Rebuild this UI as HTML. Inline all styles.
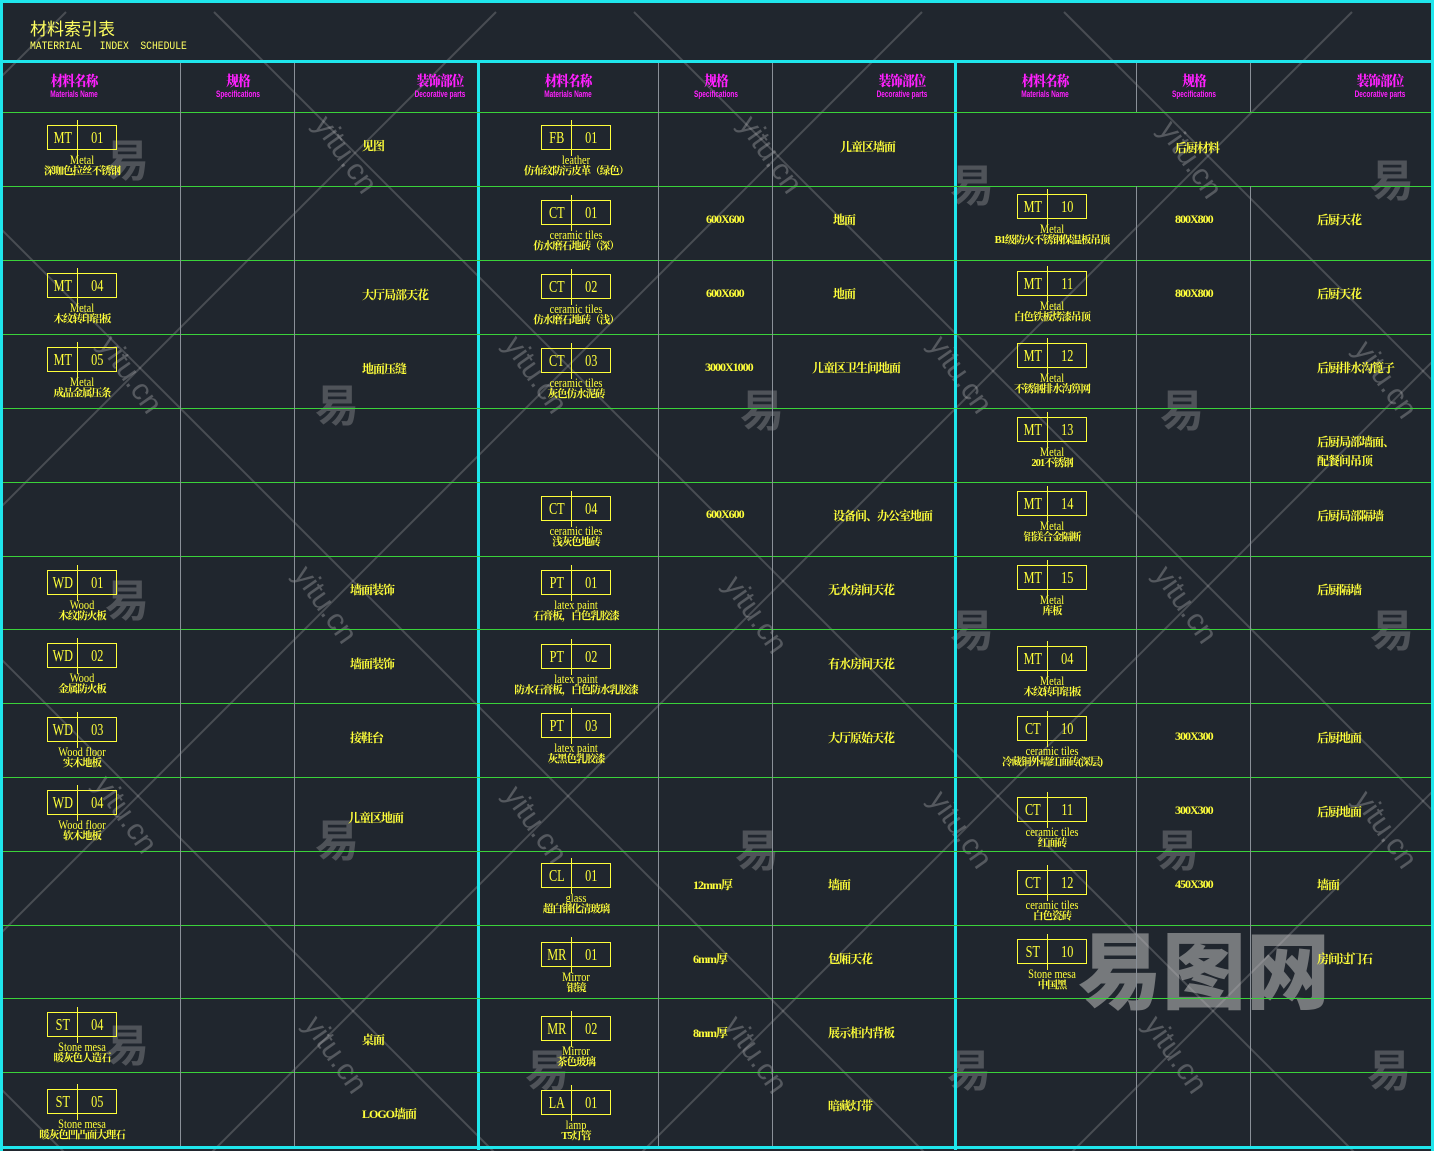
<!DOCTYPE html>
<html><head><meta charset="utf-8"><style>
*{margin:0;padding:0;box-sizing:border-box}
body{width:1434px;height:1151px;background:#20262e;position:relative;overflow:hidden;font-family:"Liberation Sans","Noto Sans CJK SC",sans-serif}
.a{position:absolute}
.cy{position:absolute;background:#1fe6ec}
.gl{position:absolute;height:1px;background:#3ad23a}
.vl{position:absolute;width:1px;background:#8a9098}
.hd{position:absolute;top:76px;width:120px;text-align:center;color:#ff20ff;font-family:"Liberation Serif","Noto Serif CJK SC",serif;font-weight:bold;line-height:1}
.hd b{display:block;font-size:14px;letter-spacing:-1px;transform:scaleX(.9)}
.hd i{display:block;font-style:normal;font-size:9px;font-weight:bold;font-family:"Liberation Sans",sans-serif;transform:scaleX(.72);white-space:nowrap;margin-top:0}
.m{position:absolute;width:200px;text-align:center;color:#ffff3a;font-family:"Liberation Serif","Noto Serif CJK SC",serif;line-height:1}
.bx{display:flex;margin:0 auto;position:relative;width:70px;height:25px;border:1px solid #ffff3a;font-size:17px;align-items:center}
.bx span{display:block;transform:scaleX(.72)}
.bx span:first-child{width:30px;text-align:center;height:100%;line-height:23px}
.bx span:last-child{width:39px;text-align:center;line-height:23px}
.bx:before{content:"";position:absolute;left:29px;top:-6px;height:36px;width:1px;background:#ffff3a}
.en{font-size:13px;line-height:11px;margin-top:4px;transform:scaleX(.8);white-space:nowrap}
.cn{font-size:10.5px;line-height:11px;font-weight:bold;letter-spacing:-1px;margin-top:1px;white-space:nowrap}
.t{position:absolute;color:#ffff3a;font-family:"Liberation Serif","Noto Serif CJK SC",serif;font-weight:bold;font-size:12px;letter-spacing:-1px;white-space:nowrap;line-height:1}
.wm{position:absolute;color:rgba(200,200,200,.28);font-family:"Noto Sans CJK SC",sans-serif;font-size:44px;font-weight:bold}
.yt{position:absolute;color:rgba(210,210,210,.3);font-family:"Liberation Sans",sans-serif;font-size:30px;transform:rotate(55deg);transform-origin:center;width:110px;text-align:center;line-height:1}
</style></head><body>
<svg class="a" style="left:0;top:0" width="1434" height="1151">
<g stroke="rgba(220,220,220,0.22)" stroke-width="2" fill="none">
<line x1="-1076" y1="12" x2="64" y2="1152"/>
<line x1="-646" y1="12" x2="494" y2="1152"/>
<line x1="-216" y1="12" x2="924" y2="1152"/>
<line x1="214" y1="12" x2="1354" y2="1152"/>
<line x1="634" y1="12" x2="1774" y2="1152"/>
<line x1="1064" y1="12" x2="2204" y2="1152"/>
<line x1="66" y1="12" x2="-1074" y2="1152"/>
<line x1="496" y1="12" x2="-644" y2="1152"/>
<line x1="922" y1="12" x2="-218" y2="1152"/>
<line x1="1352" y1="12" x2="212" y2="1152"/>
<line x1="1782" y1="12" x2="642" y2="1152"/>
<line x1="2212" y1="12" x2="1072" y2="1152"/>
</g></svg>
<div class="yt" style="left:290px;top:140px">yitu.cn</div>
<div class="yt" style="left:715px;top:140px">yitu.cn</div>
<div class="yt" style="left:1135px;top:145px">yitu.cn</div>
<div class="yt" style="left:480px;top:360px">yitu.cn</div>
<div class="yt" style="left:905px;top:360px">yitu.cn</div>
<div class="yt" style="left:1330px;top:365px">yitu.cn</div>
<div class="yt" style="left:75px;top:360px">yitu.cn</div>
<div class="yt" style="left:270px;top:590px">yitu.cn</div>
<div class="yt" style="left:700px;top:600px">yitu.cn</div>
<div class="yt" style="left:1130px;top:590px">yitu.cn</div>
<div class="yt" style="left:70px;top:800px">yitu.cn</div>
<div class="yt" style="left:480px;top:810px">yitu.cn</div>
<div class="yt" style="left:905px;top:815px">yitu.cn</div>
<div class="yt" style="left:1330px;top:815px">yitu.cn</div>
<div class="yt" style="left:280px;top:1040px">yitu.cn</div>
<div class="yt" style="left:700px;top:1040px">yitu.cn</div>
<div class="yt" style="left:1120px;top:1040px">yitu.cn</div>
<div class="wm" style="left:105px;top:125px">易</div>
<div class="wm" style="left:315px;top:370px">易</div>
<div class="wm" style="left:105px;top:565px">易</div>
<div class="wm" style="left:315px;top:805px">易</div>
<div class="wm" style="left:105px;top:1010px">易</div>
<div class="wm" style="left:740px;top:375px">易</div>
<div class="wm" style="left:735px;top:815px">易</div>
<div class="wm" style="left:525px;top:1035px">易</div>
<div class="wm" style="left:950px;top:150px">易</div>
<div class="wm" style="left:1370px;top:145px">易</div>
<div class="wm" style="left:1160px;top:375px">易</div>
<div class="wm" style="left:950px;top:595px">易</div>
<div class="wm" style="left:1370px;top:595px">易</div>
<div class="wm" style="left:1155px;top:815px">易</div>
<div class="wm" style="left:947px;top:1035px">易</div>
<div class="wm" style="left:1367px;top:1035px">易</div>
<div class="a" style="left:1078px;top:925px;font-size:84px;font-weight:900;color:rgba(190,190,190,.55);font-family:'Noto Sans CJK SC',sans-serif;line-height:1">易图网</div>

<div class="cy" style="left:0;top:0;width:1434px;height:3px"></div>
<div class="cy" style="left:0;top:0;width:3px;height:1151px"></div>
<div class="cy" style="left:1431px;top:0;width:3px;height:1151px"></div>
<div class="cy" style="left:0;top:1146px;width:1434px;height:3px"></div>
<div class="cy" style="left:0;top:60px;width:1434px;height:3px"></div>
<div class="cy" style="left:477px;top:60px;width:3px;height:1090px"></div>
<div class="cy" style="left:954px;top:60px;width:3px;height:1090px"></div>

<div class="a" style="left:30px;top:18px;color:#ffff60;font-size:17px;font-family:'Noto Sans CJK SC',sans-serif;line-height:1.2">材料索引表</div>
<div class="a" style="left:30px;top:41px;color:#ffff60;font-size:11px;font-family:'Liberation Mono',monospace;white-space:pre;transform:scaleX(.88);transform-origin:left">MATERRIAL   INDEX  SCHEDULE</div>

<div class="gl" style="left:3px;top:112px;width:1428px"></div>
<div class="gl" style="left:3px;top:186px;width:1428px"></div>
<div class="gl" style="left:3px;top:260px;width:1428px"></div>
<div class="gl" style="left:3px;top:334px;width:1428px"></div>
<div class="gl" style="left:3px;top:408px;width:1428px"></div>
<div class="gl" style="left:3px;top:482px;width:1428px"></div>
<div class="gl" style="left:3px;top:556px;width:1428px"></div>
<div class="gl" style="left:3px;top:629px;width:1428px"></div>
<div class="gl" style="left:3px;top:703px;width:1428px"></div>
<div class="gl" style="left:3px;top:777px;width:1428px"></div>
<div class="gl" style="left:3px;top:851px;width:1428px"></div>
<div class="gl" style="left:3px;top:925px;width:1428px"></div>
<div class="gl" style="left:3px;top:998px;width:1428px"></div>
<div class="gl" style="left:3px;top:1072px;width:1428px"></div>
<div class="vl" style="left:180px;top:63px;height:1083px"></div>
<div class="vl" style="left:294px;top:63px;height:1083px"></div>
<div class="vl" style="left:658px;top:63px;height:1083px"></div>
<div class="vl" style="left:772px;top:63px;height:1083px"></div>
<div class="vl" style="left:1136px;top:63px;height:49px"></div>
<div class="vl" style="left:1250px;top:63px;height:49px"></div>
<div class="vl" style="left:1136px;top:186px;height:960px"></div>
<div class="vl" style="left:1250px;top:186px;height:960px"></div>

<div class="hd" style="left:14px"><b>材料名称</b><i>Materials Name</i></div>
<div class="hd" style="left:178px"><b>规格</b><i>Specifications</i></div>
<div class="hd" style="left:380px"><b>装饰部位</b><i>Decorative parts</i></div>
<div class="hd" style="left:508px"><b>材料名称</b><i>Materials Name</i></div>
<div class="hd" style="left:656px"><b>规格</b><i>Specifications</i></div>
<div class="hd" style="left:842px"><b>装饰部位</b><i>Decorative parts</i></div>
<div class="hd" style="left:985px"><b>材料名称</b><i>Materials Name</i></div>
<div class="hd" style="left:1134px"><b>规格</b><i>Specifications</i></div>
<div class="hd" style="left:1320px"><b>装饰部位</b><i>Decorative parts</i></div>

<div class="m" style="left:-18px;top:125px"><div class="bx"><span>MT</span><span>01</span></div><div class="en">Metal</div><div class="cn">深咖色拉丝不锈钢</div></div>
<div class="t" style="left:362px;top:140px">见图</div>
<div class="m" style="left:-18px;top:273px"><div class="bx"><span>MT</span><span>04</span></div><div class="en">Metal</div><div class="cn">木纹转印铝板</div></div>
<div class="t" style="left:362px;top:289px">大厅局部天花</div>
<div class="m" style="left:-18px;top:347px"><div class="bx"><span>MT</span><span>05</span></div><div class="en">Metal</div><div class="cn">成品金属压条</div></div>
<div class="t" style="left:362px;top:363px">地面压缝</div>
<div class="m" style="left:-18px;top:570px"><div class="bx"><span>WD</span><span>01</span></div><div class="en">Wood</div><div class="cn">木纹防火板</div></div>
<div class="t" style="left:350px;top:584px">墙面装饰</div>
<div class="m" style="left:-18px;top:643px"><div class="bx"><span>WD</span><span>02</span></div><div class="en">Wood</div><div class="cn">金属防火板</div></div>
<div class="t" style="left:350px;top:658px">墙面装饰</div>
<div class="m" style="left:-18px;top:717px"><div class="bx"><span>WD</span><span>03</span></div><div class="en">Wood floor</div><div class="cn">实木地板</div></div>
<div class="t" style="left:350px;top:732px">接鞋台</div>
<div class="m" style="left:-18px;top:790px"><div class="bx"><span>WD</span><span>04</span></div><div class="en">Wood floor</div><div class="cn">软木地板</div></div>
<div class="t" style="left:348px;top:812px">儿童区地面</div>
<div class="m" style="left:-18px;top:1012px"><div class="bx"><span>ST</span><span>04</span></div><div class="en">Stone mesa</div><div class="cn">暖灰色人造石</div></div>
<div class="t" style="left:362px;top:1034px">桌面</div>
<div class="m" style="left:-18px;top:1089px"><div class="bx"><span>ST</span><span>05</span></div><div class="en">Stone mesa</div><div class="cn">暖灰色凹凸面大理石</div></div>
<div class="t" style="left:362px;top:1108px">LOGO墙面</div>

<div class="m" style="left:476px;top:125px"><div class="bx"><span>FB</span><span>01</span></div><div class="en">leather</div><div class="cn">仿布纹防污皮革（绿色）</div></div>
<div class="t" style="left:840px;top:141px">儿童区墙面</div>
<div class="m" style="left:476px;top:200px"><div class="bx"><span>CT</span><span>01</span></div><div class="en">ceramic tiles</div><div class="cn">仿水磨石地砖（深）</div></div>
<div class="t" style="left:706px;top:213px">600X600</div><div class="t" style="left:833px;top:214px">地面</div>
<div class="m" style="left:476px;top:274px"><div class="bx"><span>CT</span><span>02</span></div><div class="en">ceramic tiles</div><div class="cn">仿水磨石地砖（浅）</div></div>
<div class="t" style="left:706px;top:287px">600X600</div><div class="t" style="left:833px;top:288px">地面</div>
<div class="m" style="left:476px;top:348px"><div class="bx"><span>CT</span><span>03</span></div><div class="en">ceramic tiles</div><div class="cn">灰色仿水泥砖</div></div>
<div class="t" style="left:705px;top:361px">3000X1000</div><div class="t" style="left:812px;top:362px">儿童区卫生间地面</div>
<div class="m" style="left:476px;top:496px"><div class="bx"><span>CT</span><span>04</span></div><div class="en">ceramic tiles</div><div class="cn">浅灰色地砖</div></div>
<div class="t" style="left:706px;top:508px">600X600</div><div class="t" style="left:833px;top:510px">设备间、办公室地面</div>
<div class="m" style="left:476px;top:570px"><div class="bx"><span>PT</span><span>01</span></div><div class="en">latex paint</div><div class="cn">石膏板，白色乳胶漆</div></div>
<div class="t" style="left:828px;top:584px">无水房间天花</div>
<div class="m" style="left:476px;top:644px"><div class="bx"><span>PT</span><span>02</span></div><div class="en">latex paint</div><div class="cn">防水石膏板，白色防水乳胶漆</div></div>
<div class="t" style="left:828px;top:658px">有水房间天花</div>
<div class="m" style="left:476px;top:713px"><div class="bx"><span>PT</span><span>03</span></div><div class="en">latex paint</div><div class="cn">灰黑色乳胶漆</div></div>
<div class="t" style="left:828px;top:732px">大厅原始天花</div>
<div class="m" style="left:476px;top:863px"><div class="bx"><span>CL</span><span>01</span></div><div class="en">glass</div><div class="cn">超白钢化清玻璃</div></div>
<div class="t" style="left:693px;top:879px">12mm厚</div><div class="t" style="left:828px;top:879px">墙面</div>
<div class="m" style="left:476px;top:942px"><div class="bx"><span>MR</span><span>01</span></div><div class="en">Mirror</div><div class="cn">银镜</div></div>
<div class="t" style="left:693px;top:953px">6mm厚</div><div class="t" style="left:828px;top:953px">包厢天花</div>
<div class="m" style="left:476px;top:1016px"><div class="bx"><span>MR</span><span>02</span></div><div class="en">Mirror</div><div class="cn">茶色玻璃</div></div>
<div class="t" style="left:693px;top:1027px">8mm厚</div><div class="t" style="left:828px;top:1027px">展示柜内背板</div>
<div class="m" style="left:476px;top:1090px"><div class="bx"><span>LA</span><span>01</span></div><div class="en">lamp</div><div class="cn">T5灯管</div></div>
<div class="t" style="left:828px;top:1100px">暗藏灯带</div>

<div class="t" style="left:1175px;top:142px">后厨材料</div>
<div class="m" style="left:952px;top:194px"><div class="bx"><span>MT</span><span>10</span></div><div class="en">Metal</div><div class="cn">B1级防火不锈钢保温板吊顶</div></div>
<div class="t" style="left:1175px;top:213px">800X800</div><div class="t" style="left:1317px;top:214px">后厨天花</div>
<div class="m" style="left:952px;top:271px"><div class="bx"><span>MT</span><span>11</span></div><div class="en">Metal</div><div class="cn">白色铁板烤漆吊顶</div></div>
<div class="t" style="left:1175px;top:287px">800X800</div><div class="t" style="left:1317px;top:288px">后厨天花</div>
<div class="m" style="left:952px;top:343px"><div class="bx"><span>MT</span><span>12</span></div><div class="en">Metal</div><div class="cn">不锈钢排水沟箅网</div></div>
<div class="t" style="left:1317px;top:362px">后厨排水沟篦子</div>
<div class="m" style="left:952px;top:417px"><div class="bx"><span>MT</span><span>13</span></div><div class="en">Metal</div><div class="cn">201不锈钢</div></div>
<div class="t" style="left:1317px;top:433px;line-height:19px">后厨局部墙面、<br>配餐间吊顶</div>
<div class="m" style="left:952px;top:491px"><div class="bx"><span>MT</span><span>14</span></div><div class="en">Metal</div><div class="cn">铝镁合金隔断</div></div>
<div class="t" style="left:1317px;top:510px">后厨局部隔墙</div>
<div class="m" style="left:952px;top:565px"><div class="bx"><span>MT</span><span>15</span></div><div class="en">Metal</div><div class="cn">库板</div></div>
<div class="t" style="left:1317px;top:584px">后厨隔墙</div>
<div class="m" style="left:952px;top:646px"><div class="bx"><span>MT</span><span>04</span></div><div class="en">Metal</div><div class="cn">木纹转印铝板</div></div>
<div class="m" style="left:952px;top:716px"><div class="bx"><span>CT</span><span>10</span></div><div class="en">ceramic tiles</div><div class="cn">冷藏铜外墙红面砖(深层)</div></div>
<div class="t" style="left:1175px;top:730px">300X300</div><div class="t" style="left:1317px;top:732px">后厨地面</div>
<div class="m" style="left:952px;top:797px"><div class="bx"><span>CT</span><span>11</span></div><div class="en">ceramic tiles</div><div class="cn">红面砖</div></div>
<div class="t" style="left:1175px;top:804px">300X300</div><div class="t" style="left:1317px;top:806px">后厨地面</div>
<div class="m" style="left:952px;top:870px"><div class="bx"><span>CT</span><span>12</span></div><div class="en">ceramic tiles</div><div class="cn">白色瓷砖</div></div>
<div class="t" style="left:1175px;top:878px">450X300</div><div class="t" style="left:1317px;top:879px">墙面</div>
<div class="m" style="left:952px;top:939px"><div class="bx"><span>ST</span><span>10</span></div><div class="en">Stone mesa</div><div class="cn">中国黑</div></div>
<div class="t" style="left:1317px;top:953px">房间过门石</div>
</body></html>
